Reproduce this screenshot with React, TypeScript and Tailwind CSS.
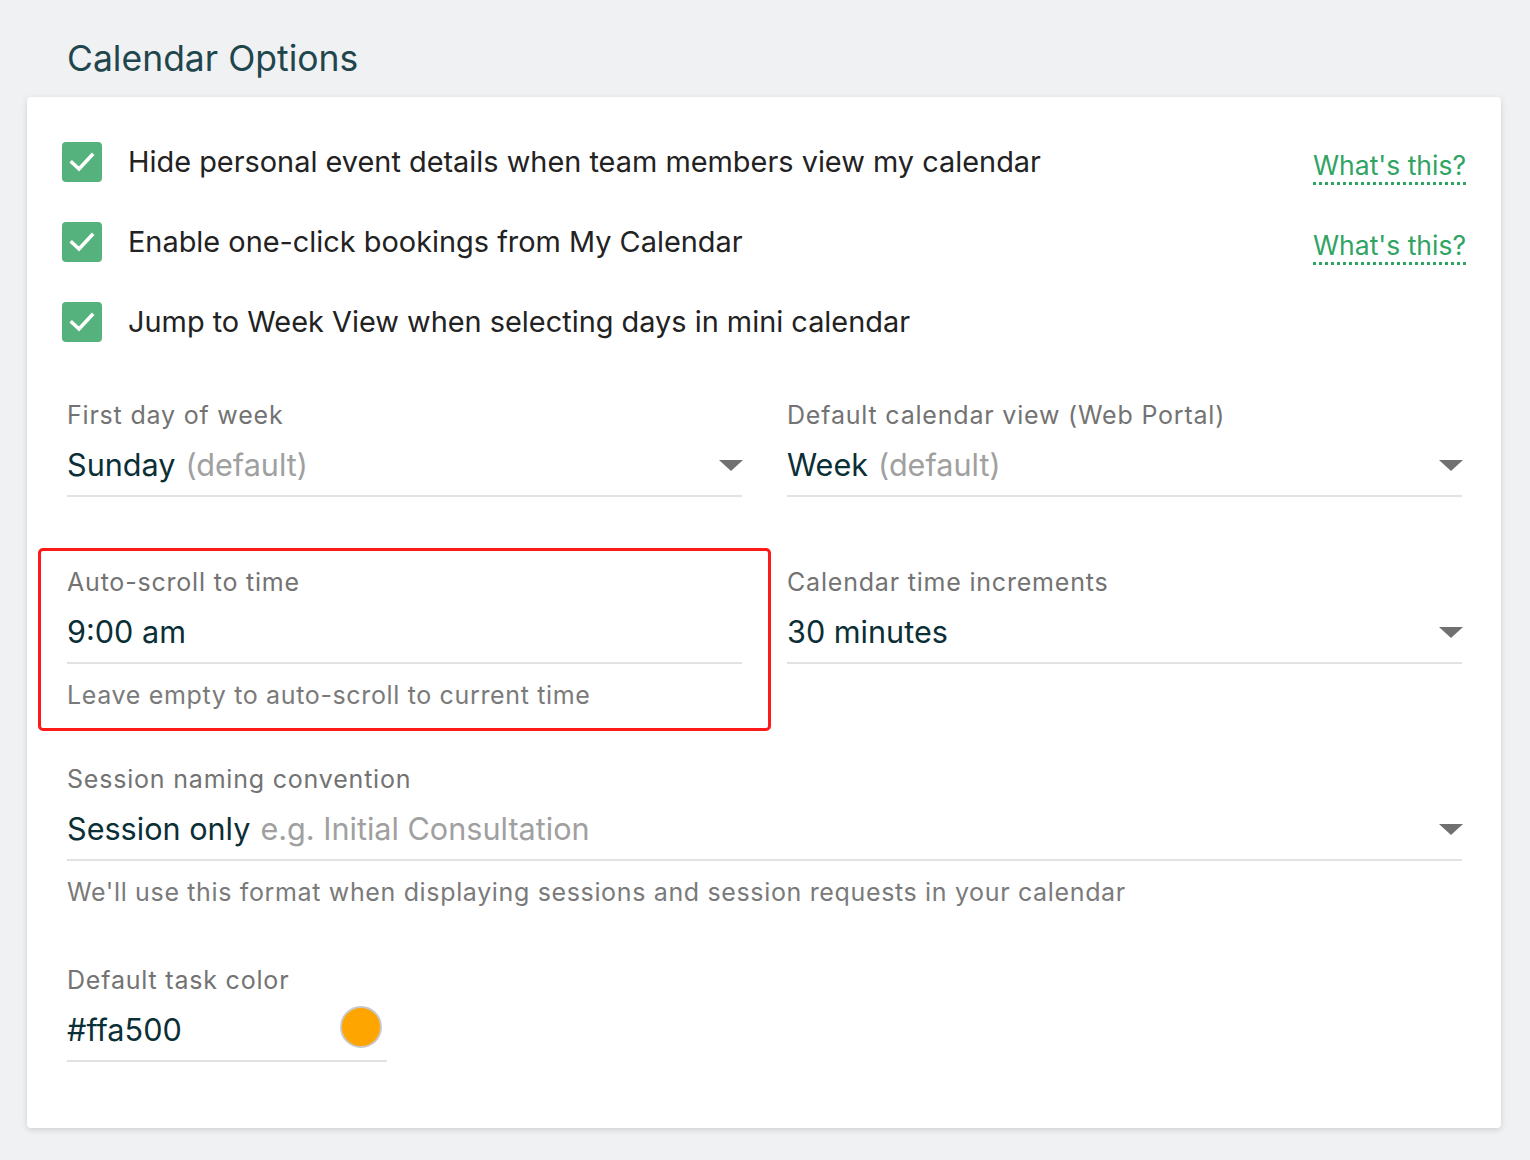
import React from "react";

const font = { fontFamily: "Inter, 'Noto Sans', sans-serif" };

function CheckBox() {
  return (
    <div className="w-[40px] h-[40px] rounded-[4px] bg-[#55b27c] flex items-center justify-center shrink-0">
      <svg width="30" height="30" viewBox="0 0 30 30" fill="none">
        <path d="M5 15.5 L12 22 L25 8" stroke="white" strokeWidth="3.6" strokeLinecap="square" />
      </svg>
    </div>
  );
}

function Caret() {
  return (
    <svg width="24" height="11" viewBox="0 0 24 11" className="shrink-0">
      <path d="M0 0 H24 L12 11 Z" fill="#707070" />
    </svg>
  );
}

function Option({ text, help }: { text: string; help?: boolean }) {
  return (
    <div className="flex items-center h-[40px]">
      <CheckBox />
      <span className="ml-[26px] text-[28.9px] text-[#222222] flex-1">{text}</span>
      {help && (
        <span className="text-[26.5px] text-[#2fa463] border-b-[3px] border-dotted border-[#2fa463] leading-[34px] mt-[9px]">
          What's this?
        </span>
      )}
    </div>
  );
}

function Label({ children }: { children: React.ReactNode }) {
  return <div className="text-[25px] leading-[32px] tracking-[0.8px] text-[#737373]">{children}</div>;
}

function Hint({ children }: { children: React.ReactNode }) {
  return <div className="mt-[15px] text-[25px] leading-[32px] tracking-[0.65px] text-[#7a7a7a]">{children}</div>;
}

function Select({ label, value, note }: { label: string; value: string; note?: string }) {
  return (
    <div>
      <Label>{label}</Label>
      <div className="flex items-center pt-[14px] pb-[10px] border-b-2 border-[#e2e2e2]">
        <div className="flex-1 text-[30.6px] leading-[40px] text-[#0b2f36]">
          {value}
          {note && <span className="ml-[10px] text-[#a0a0a0]">{note}</span>}
        </div>
        <div className="-mr-[1px]">
          <Caret />
        </div>
      </div>
    </div>
  );
}

export default function App() {
  return (
    <div style={font} className="min-h-screen bg-[#f0f1f3] pl-[27px] pr-[29px] pt-[31px] pb-[32px]">
      <h1 className="pl-[40px] text-[35.5px] leading-[56px] text-[#1f464c] font-normal">Calendar Options</h1>

      <div className="mt-[10px] bg-white rounded-[4px] shadow-[0_2px_6px_rgba(0,0,0,0.14)] pt-[45px] pb-[66px]">
        <div className="pl-[35px] pr-[35px] flex flex-col gap-[40px]">
          <Option text="Hide personal event details when team members view my calendar" help />
          <Option text="Enable one-click bookings from My Calendar" help />
          <Option text="Jump to Week View when selecting days in mini calendar" />
        </div>

        <div className="pl-[40px] pr-[39px] mt-[57px]">
          <div className="grid grid-cols-2 gap-x-[45px]">
            <Select label="First day of week" value="Sunday" note="(default)" />
            <Select label="Default calendar view (Web Portal)" value="Week" note="(default)" />
          </div>

          <div className="grid grid-cols-2 gap-x-[45px] mt-[69px] items-start">
            <div className="-mx-[29px] -mt-[18px] -mb-[20px] px-[26px] pt-[15px] pb-[17px] border-[3px] border-[#ff1a1a] rounded-[5px]">
              <Label>Auto-scroll to time</Label>
              <div className="pt-[14px] pb-[10px] border-b-2 border-[#e2e2e2] text-[30.6px] leading-[40px] text-[#0b2f36]">
                9:00 am
              </div>
              <Hint>Leave empty to auto-scroll to current time</Hint>
            </div>
            <Select label="Calendar time increments" value="30 minutes" />
          </div>

          <div className="mt-[52px]">
            <Select label="Session naming convention" value="Session only" note="e.g. Initial Consultation" />
            <Hint>We'll use this format when displaying sessions and session requests in your calendar</Hint>
          </div>

          <div className="mt-[56px] w-[320px]">
            <Label>Default task color</Label>
            <div className="flex items-center pt-[14px] pb-[10px] border-b-2 border-[#e2e2e2]">
              <div className="flex-1 text-[30.6px] leading-[40px] text-[#0b2f36]">#ffa500</div>
              <div className="w-[42px] h-[42px] rounded-full bg-[#ffa500] border-2 border-[#c8c8c8] -mt-[6px] mr-[5px]" />
            </div>
          </div>
        </div>
      </div>
    </div>
  );
}
